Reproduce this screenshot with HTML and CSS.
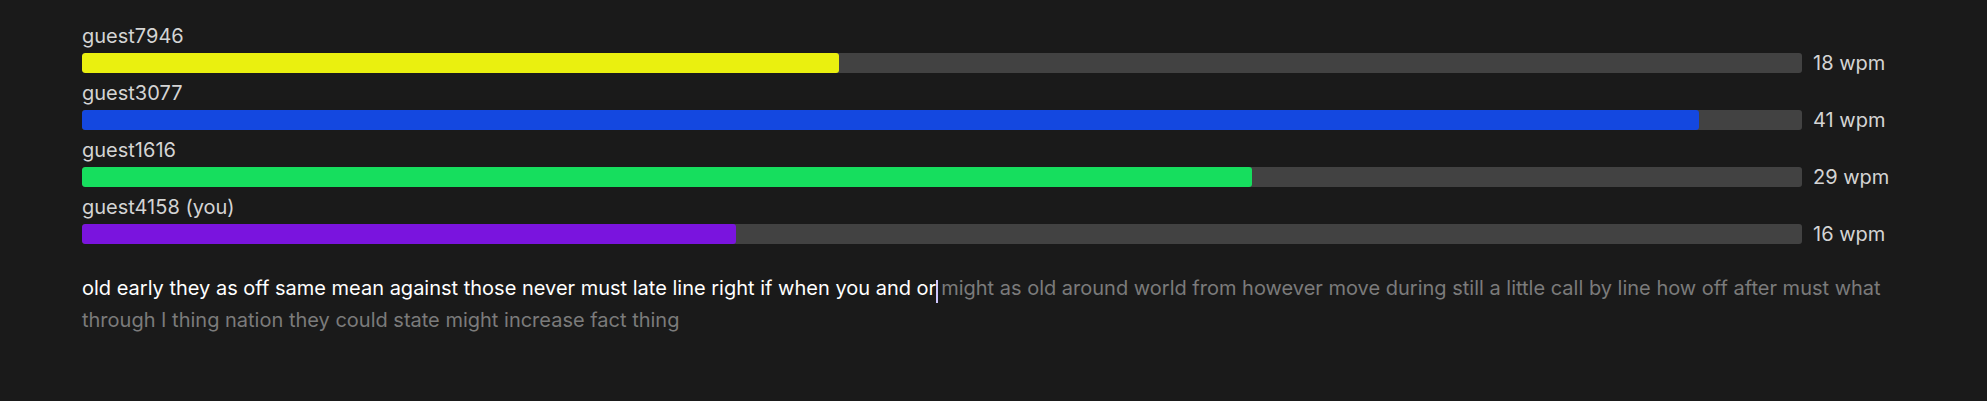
FILE: index.html
```html
<!DOCTYPE html>
<html>
<head>
<meta charset="utf-8">
<link rel="stylesheet" href="styles.css">
</head>
<body>
<main class="race">
  <section class="players">
    <div class="player">
      <div class="name">guest7946</div>
      <div class="track-row">
        <div class="track"><div class="fill yellow" style="width:44%"></div></div>
        <div class="wpm">18 wpm</div>
      </div>
    </div>
    <div class="player">
      <div class="name">guest3077</div>
      <div class="track-row">
        <div class="track"><div class="fill blue" style="width:94%"></div></div>
        <div class="wpm">41 wpm</div>
      </div>
    </div>
    <div class="player">
      <div class="name">guest1616</div>
      <div class="track-row">
        <div class="track"><div class="fill green" style="width:68%"></div></div>
        <div class="wpm">29 wpm</div>
      </div>
    </div>
    <div class="player">
      <div class="name">guest4158 (you)</div>
      <div class="track-row">
        <div class="track"><div class="fill purple" style="width:38%"></div></div>
        <div class="wpm">16 wpm</div>
      </div>
    </div>
  </section>
  <p class="passage"><span class="typed">old early they as off same mean against those never must late line right if when you and or</span><span class="caret"></span><span class="pending">might as old around world from however move during still a little call by line how off after must what through I thing nation they could state might increase fact thing</span></p>
</main>
</body>
</html>
```

FILE: styles.css
```css
html, body {
  margin: 0;
  padding: 0;
  background: #1a1a1a;
}

body {
  font-family: Inter, "Noto Sans", sans-serif;
  color: #d4d4d4;
}

.race {
  padding: 22px 82px 0 82px;
}

.players {
  display: flex;
  flex-direction: column;
  gap: 6px;
}

.name {
  font-size: 20px;
  line-height: 28px;
  margin-bottom: 3px;
  color: #d4d4d4;
}

.track-row {
  display: flex;
  align-items: center;
  gap: 11px;
  height: 20px;
}

.track {
  flex: 1;
  height: 20px;
  background: #424242;
  border-radius: 3px;
  overflow: hidden;
}

.fill {
  height: 100%;
  border-radius: 3px;
}

.yellow { background: #eaf00f; }
.blue { background: #1448e0; }
.green { background: #16de5e; }
.purple { background: #7a14de; }

.wpm {
  width: 92px;
  font-size: 20px;
  line-height: 20px;
  color: #d4d4d4;
  white-space: nowrap;
}

.passage {
  margin: 29px 0 0 0;
  font-size: 20px;
  line-height: 31.5px;
}

.typed {
  color: #ffffff;
}

.caret {
  display: inline-block;
  width: 2px;
  height: 23px;
  background: #cfc7ff;
  vertical-align: -7.7px;
  margin-right: 3px;
}

.pending {
  color: #7b7b7b;
}
```
